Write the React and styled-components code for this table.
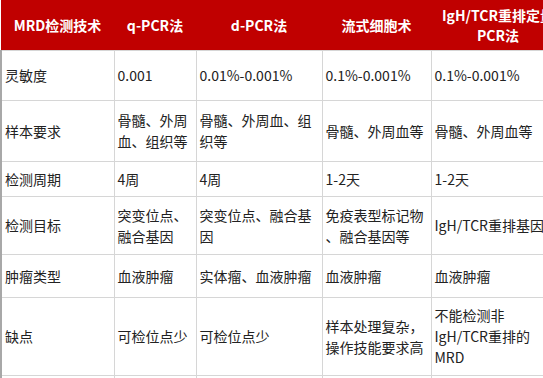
import React from "react";
import styled, { createGlobalStyle } from "styled-components";

const GlobalStyle = createGlobalStyle`
  body {
    margin: 0;
    background: #ffffff;
    overflow: hidden;
  }
`;

const columns = [
  { title: "MRD检测技术", width: 113 },
  { title: "q-PCR法", width: 82 },
  { title: "d-PCR法", width: 126 },
  { title: "流式细胞术", width: 109 },
  { title: "IgH/TCR重排定量\nPCR法", width: 134 },
];

// line breaks follow the wrapping of the original table
const rows = [
  { height: 50, cells: ["灵敏度", "0.001", "0.01%-0.001%", "0.1%-0.001%", "0.1%-0.001%"] },
  { height: 61, cells: ["样本要求", "骨髓、外周\n血、组织等", "骨髓、外周血、组\n织等", "骨髓、外周血等", "骨髓、外周血等"] },
  { height: 35, cells: ["检测周期", "4周", "4周", "1-2天", "1-2天"] },
  { height: 58, cells: ["检测目标", "突变位点、\n融合基因", "突变位点、融合基\n因", "免疫表型标记物\n、融合基因等", "IgH/TCR重排基因"] },
  { height: 43, cells: ["肿瘤类型", "血液肿瘤", "实体瘤、血液肿瘤", "血液肿瘤", "血液肿瘤"] },
  { height: 78, cells: ["缺点", "可检位点少", "可检位点少", "样本处理复杂，\n操作技能要求高", "不能检测非\nIgH/TCR重排的\nMRD"] },
  { height: 40, cells: ["", "", "", "", ""] },
];

const App = () => {
  return (
    <>
      <GlobalStyle />
      <Wrapper>
        <Table>
          <colgroup>
            {columns.map((col, index) => (
              <Col key={index} $w={col.width} />
            ))}
          </colgroup>
          <thead>
            <tr>
              {columns.map((col, index) => (
                <Head key={index}>{col.title}</Head>
              ))}
            </tr>
          </thead>
          <tbody>
            {rows.map((row, rowIndex) => (
              <Row key={rowIndex} $h={row.height}>
                {row.cells.map((cell, index) => (
                  <Cell key={index} $first={index === 0}>
                    {cell}
                  </Cell>
                ))}
              </Row>
            ))}
          </tbody>
        </Table>
      </Wrapper>
    </>
  );
};

const Wrapper = styled.div`
  width: 543px;
  height: 378px;
  overflow: hidden;
  font-family: "Noto Sans CJK SC", "Noto Sans", sans-serif;
`;

const Table = styled.table`
  width: 564px;
  table-layout: fixed;
  border-collapse: collapse;
  border-spacing: 0;
`;

const Col = styled.col`
  width: ${(p) => p.$w}px;
`;

const Head = styled.th`
  height: 50px;
  padding: 0 4px;
  background: #c00000;
  color: #ffffff;
  font-size: 14px;
  font-weight: 700;
  line-height: 20px;
  text-align: center;
  vertical-align: middle;
  white-space: pre;
  border: none;
`;

const Row = styled.tr`
  height: ${(p) => p.$h}px;
`;

const Cell = styled.td`
  padding: 0 2px 0 3px;
  font-size: 14px;
  line-height: 21px;
  color: #222222;
  text-align: left;
  vertical-align: middle;
  white-space: pre;
  border: 1px solid #d6d6d6;
  border-left: ${(p) => (p.$first ? "2px solid #a8a8a8" : "1px solid #d6d6d6")};
`;

export default App;
